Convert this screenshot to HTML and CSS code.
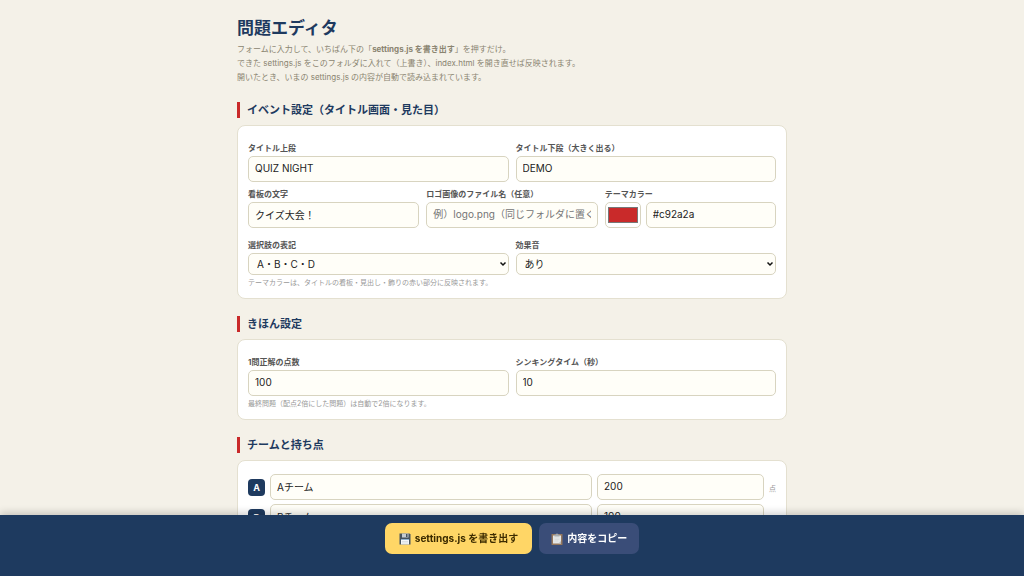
FILE: index.html
```
<!DOCTYPE html>
<html lang="ja">
<head>
    <meta charset="UTF-8">
    <meta name="viewport" content="width=device-width, initial-scale=1.0">
    <title>問題エディタ</title>
    <link rel="stylesheet" href="styles.css">
</head>
<body>
    <main class="wrap">
        <h1>問題エディタ</h1>
        <p class="lead">
            フォームに入力して、いちばん下の「<b>settings.js を書き出す</b>」を押すだけ。<br>
            できた settings.js をこのフォルダに入れて（上書き）、index.html を開き直せば反映されます。<br>
            開いたとき、いまの settings.js の内容が自動で読み込まれています。
        </p>

        <!-- イベント設定 -->
        <h2>イベント設定（タイトル画面・見た目）</h2>
        <section class="card">
            <div class="row">
                <div class="field">
                    <label for="title1">タイトル上段</label>
                    <input type="text" id="title1" value="QUIZ NIGHT">
                </div>
                <div class="field">
                    <label for="title2">タイトル下段（大きく出る）</label>
                    <input type="text" id="title2" value="DEMO">
                </div>
            </div>
            <div class="row row-theme">
                <div class="field">
                    <label for="sign">看板の文字</label>
                    <input type="text" id="sign" value="クイズ大会！">
                </div>
                <div class="field">
                    <label for="logo">ロゴ画像のファイル名（任意）</label>
                    <input type="text" id="logo" placeholder="例）logo.png（同じフォルダに置く）">
                </div>
                <div class="field">
                    <label for="themeText">テーマカラー</label>
                    <div class="color-pair">
                        <input type="color" id="themeColor" value="#c92a2a" aria-label="テーマカラーを選ぶ">
                        <input type="text" id="themeText" value="#c92a2a">
                    </div>
                </div>
            </div>
            <div class="row">
                <div class="field">
                    <label for="choices">選択肢の表記</label>
                    <select id="choices">
                        <option>A・B・C・D</option>
                    </select>
                </div>
                <div class="field">
                    <label for="sound">効果音</label>
                    <select id="sound">
                        <option>あり</option>
                    </select>
                </div>
            </div>
            <p class="hint">テーマカラーは、タイトルの看板・見出し・飾りの赤い部分に反映されます。</p>
        </section>

        <!-- きほん設定 -->
        <h2>きほん設定</h2>
        <section class="card">
            <div class="row">
                <div class="field">
                    <label for="points">1問正解の点数</label>
                    <input type="number" id="points" value="100">
                </div>
                <div class="field">
                    <label for="time">シンキングタイム（秒）</label>
                    <input type="number" id="time" value="10">
                </div>
            </div>
            <p class="hint">最終問題（配点2倍にした問題）は自動で2倍になります。</p>
        </section>

        <!-- チーム -->
        <h2>チームと持ち点</h2>
        <section class="card teams">
            <div class="team">
                <span class="badge">A</span>
                <input type="text" value="Aチーム" aria-label="Aのチーム名">
                <input type="number" value="200" aria-label="Aの持ち点">
                <span class="unit">点</span>
            </div>
            <div class="team">
                <span class="badge">B</span>
                <input type="text" value="Bチーム" aria-label="Bのチーム名">
                <input type="number" value="100" aria-label="Bの持ち点">
                <span class="unit">点</span>
            </div>
        </section>
    </main>

    <div class="bar">
        <button type="button" class="btn btn-save">
            <svg class="icon" viewBox="0 0 24 24" aria-hidden="true">
                <path d="M1 1h20l2 2v20H1z" fill="#46535f"/>
                <path d="M6 1h13v8H6z" fill="#c5ccd2"/>
                <path d="M14 2h3v6h-3z" fill="#46535f"/>
                <path d="M4 12h16v11H4z" fill="#f4f6f8"/>
                <path d="M4 12h16v2H4z" fill="#8fb0cf"/>
                <path d="M6 17h12M6 20h12" stroke="#c3cad1" stroke-width="1"/>
            </svg>
            settings.js を書き出す
        </button>
        <button type="button" class="btn btn-copy">
            <svg class="icon" viewBox="0 0 24 24" aria-hidden="true">
                <rect x="1" y="2" width="22" height="22" rx="1" fill="#94775c"/>
                <path d="M4 5h16v16H4z" fill="#e4e6e6"/>
                <path d="M15 21l5-5v5z" fill="#b9bcbd"/>
                <path d="M7 3h3a2 2 0 0 1 4 0h3v4H7z" fill="#a5abaf"/>
                <path d="M7 10h10M7 13h10M7 16h7" stroke="#cdd0d1" stroke-width="1"/>
            </svg>
            内容をコピー
        </button>
    </div>
</body>
</html>
```

FILE: styles.css
```
* {
    box-sizing: border-box;
}
body {
    margin: 0;
    padding: 16px 16px 80px;
    background: #f4f1e8;
    color: #222;
    font-family: Inter, "Noto Sans CJK JP", sans-serif;
    font-size: 10px;
}
.wrap {
    max-width: 550px;
    margin: 0 auto;
}
h1 {
    margin: 0 0 2px;
    font-size: 17px;
    line-height: 24px;
    color: #1e3a5f;
}
.lead {
    margin: 0 0 18px;
    font-size: 8px;
    line-height: 14px;
    color: #8a8470;
}
h2 {
    margin: 17px 0 7px;
    padding-left: 7px;
    border-left: 3px solid #c92a2a;
    font-size: 11px;
    line-height: 16px;
    color: #1e3a5f;
}
.card {
    padding: 10px;
    background: #fff;
    border: 1px solid #e4e0d0;
    border-radius: 8px;
}
.row {
    display: flex;
    gap: 7px;
}
.row-theme {
    margin-bottom: 5px;
}
.field {
    flex: 1;
    min-width: 0;
}
label {
    display: block;
    margin-top: 5px;
    font-size: 8px;
    font-weight: bold;
    line-height: 15px;
    color: #555;
}
input,
select {
    display: block;
    width: 100%;
    min-width: 0;
    border: 1px solid #d8d4c0;
    border-radius: 5px;
    background: #fffef8;
    color: #222;
    font-family: inherit;
    font-size: 10px;
    line-height: 14px;
}
input {
    height: 26px;
    padding: 4px 6px 6px;
}
select {
    height: 22px;
    padding: 0 16px 0 8px;
    appearance: none;
    background: #fffef8 url("data:image/svg+xml,%3Csvg xmlns='http://www.w3.org/2000/svg' viewBox='0 0 8 6'%3E%3Cpath d='M1.5 1.5L4 4l2.5-2.5' fill='none' stroke='%23111' stroke-width='1.5'/%3E%3C/svg%3E") no-repeat right 1px center / 8px 6px;
}
input[type="number"] {
    appearance: textfield;
}
.color-pair {
    display: flex;
    gap: 5px;
}
.color-pair input[type="color"] {
    flex: 0 0 36px;
    padding: 0;
    background: #fff;
}
.hint {
    margin: 2px 0 0;
    font-size: 7px;
    line-height: 11px;
    color: #999;
}
.teams {
    padding-top: 13px;
}
.team {
    display: grid;
    grid-template-columns: 17px 27fr 14fr 7px;
    align-items: center;
    gap: 5px;
    margin-bottom: 4px;
}
.badge {
    border-radius: 4px;
    background: #1e3a5f;
    color: #fff;
    font-size: 9px;
    font-weight: bold;
    line-height: 17px;
    text-align: center;
}
.unit {
    padding-top: 2px;
    font-size: 7px;
    color: #999;
}
.bar {
    position: fixed;
    left: 0;
    right: 0;
    bottom: 0;
    display: flex;
    justify-content: center;
    gap: 7px;
    padding: 8px 8px 22px;
    background: #1e3a5f;
    box-shadow: 0 -2px 8px rgba(0, 0, 0, 0.2);
}
.btn {
    display: flex;
    align-items: center;
    gap: 4px;
    padding: 8px 14px;
    border: 0;
    border-radius: 7px;
    font-family: inherit;
    font-size: 10px;
    font-weight: bold;
    line-height: 15px;
    cursor: pointer;
}
.btn-save {
    background: #ffd666;
    color: #3d2c00;
}
.btn-copy {
    padding: 8px 12px;
    background: #3a4d78;
    color: #fff;
}
.icon {
    width: 12px;
    height: 12px;
}
```
